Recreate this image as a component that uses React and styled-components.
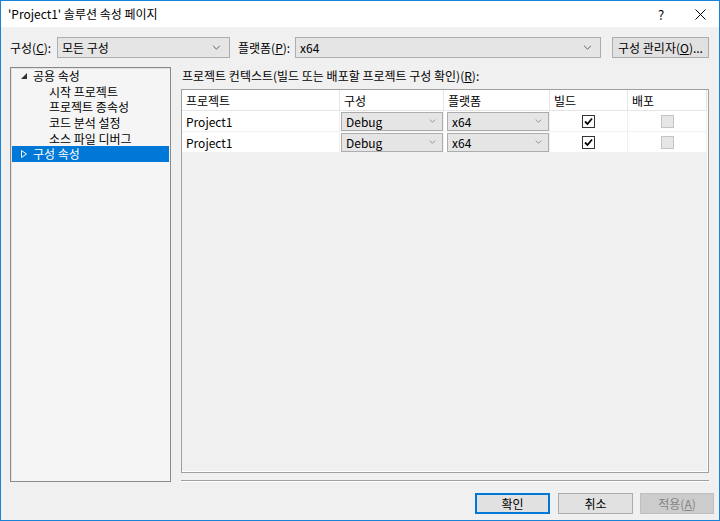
import React from 'react';
import styled, { createGlobalStyle } from 'styled-components';

const GlobalStyle = createGlobalStyle`
	* { box-sizing: border-box; }
	body {
		margin: 0;
		font-family: 'Noto Sans CJK KR', 'Noto Sans', sans-serif;
		font-size: 12px;
		color: #000;
	}
`;

const Window = styled.div`
	width: 720px;
	height: 521px;
	display: flex;
	flex-direction: column;
	border: 1px solid #1883d7;
	background-color: #f0f0f0;
	overflow: hidden;
`;

const TitleBar = styled.div`
	height: 26px;
	display: flex;
	align-items: center;
	background-color: #fff;
	padding-left: 7px;
`;

const Title = styled.div`
	flex: 1;
	font-size: 12px;
	padding-bottom: 1px;
`;

const TitleButton = styled.div`
	width: ${props => props.w || 40}px;
	display: flex;
	justify-content: center;
	align-items: center;
	font-size: 13px;
`;

const Body = styled.div`
	flex: 1;
	display: flex;
	flex-direction: column;
	padding: 10px 10px 0 9px;
`;

const TopRow = styled.div`
	display: flex;
	align-items: center;
	height: 21px;
`;

const Label = styled.div`
	width: ${props => props.w}px;
	margin-left: ${props => props.ml || 0}px;
	white-space: nowrap;
`;

const Combo = styled.div`
	width: ${props => (props.w ? props.w + 'px' : 'auto')};
	flex: ${props => (props.w ? 'none' : 1)};
	height: ${props => props.h || 21}px;
	display: flex;
	align-items: center;
	justify-content: space-between;
	padding: 0 ${props => props.pr || 8}px 0 ${props => props.pl || 4}px;
	background-color: #e5e5e5;
	border: 1px solid #adadad;
	margin: ${props => props.m || 0};
`;

const Button = styled.div`
	width: ${props => props.w}px;
	height: 21px;
	display: flex;
	align-items: center;
	justify-content: center;
	background-color: ${props => (props.disabled ? '#cccccc' : '#e1e1e1')};
	border: 1px solid
		${props => (props.primary ? '#0078d7' : props.disabled ? '#bfbfbf' : '#adadad')};
	box-shadow: ${props => (props.primary ? 'inset 0 0 0 1px #0078d7' : 'none')};
	color: ${props => (props.disabled ? '#838383' : '#000')};
	margin-left: ${props => props.ml || 0}px;
`;

const Main = styled.div`
	display: flex;
	margin-top: 9px;
	height: 415px;
`;

const TreePanel = styled.div`
	width: 161px;
	background-color: #f5f5f5;
	border: 1px solid #8a8a8a;
	box-shadow: inset 1px 1px 0 #e3e3e3;
	padding: 0 1px;
`;

const TreeItem = styled.div`
	height: 15.6px;
	display: flex;
	align-items: center;
	padding-left: ${props => props.indent}px;
	background-color: ${props => (props.selected ? '#0078d7' : 'transparent')};
	color: ${props => (props.selected ? '#fff' : '#000')};
	white-space: nowrap;
	line-height: 15px;
`;

const Arrow = styled.span`
	width: 12px;
	display: inline-flex;
	align-items: center;
`;

const RightColumn = styled.div`
	flex: 1;
	display: flex;
	flex-direction: column;
	margin-left: 10px;
`;

const SectionLabel = styled.div`
	height: 22px;
	display: flex;
	align-items: center;
	padding-left: 1px;
	padding-bottom: 5px;
`;

const GridBox = styled.div`
	flex: 1;
	border: 1px solid #a0a0a0;
	box-shadow: inset -1px -1px 0 #fff;
	background-color: #f0f0f0;
	padding-right: 1px;
`;

const GridRow = styled.div`
	display: grid;
	grid-template-columns: 158px 104px 106px 78px 79px;
	height: ${props => props.h || 21}px;
	background-color: #fff;
	border-bottom: 1px solid ${props => (props.header ? '#e5e5e5' : '#f0f0f0')};
`;

const Cell = styled.div`
	display: flex;
	align-items: center;
	justify-content: ${props => (props.center ? 'center' : 'flex-start')};
	padding-left: ${props => (props.center ? 0 : 4)}px;
	border-right: 1px solid ${props => (props.header ? '#e5e5e5' : '#f0f0f0')};
	white-space: nowrap;
`;

const ComboCell = styled(Cell)`
	padding: 0 1px;
`;

const CheckBox = styled.div`
	width: 13px;
	height: 13px;
	border: 1px solid ${props => (props.disabled ? '#c4c4c4' : '#333')};
	background-color: ${props => (props.disabled ? '#e6e6e6' : '#fff')};
	display: flex;
	align-items: center;
	justify-content: center;
`;

const Separator = styled.div`
	margin-top: 7px;
	height: 2px;
	border-top: 1px solid #a0a0a0;
	border-bottom: 1px solid #fff;
`;

const Footer = styled.div`
	display: flex;
	justify-content: flex-end;
	margin-top: 11px;
	margin-right: -5px;
`;

const Chevron = ({ size = 9, color = '#555' }) => (
	<svg width={size} height={Math.round(size * 0.6)} viewBox="0 0 10 6">
		<path d="M1 1 L5 5 L9 1" fill="none" stroke={color} strokeWidth="1.1" />
	</svg>
);

const Check = () => (
	<svg width="9" height="9" viewBox="0 0 9 9">
		<path d="M1 4.5 L3.5 7 L8 1.5" fill="none" stroke="#000" strokeWidth="1.8" />
	</svg>
);

const projects = [
	{ name: 'Project1', config: 'Debug', platform: 'x64', build: true },
	{ name: 'Project1', config: 'Debug', platform: 'x64', build: true },
];

const treeChildren = ['시작 프로젝트', '프로젝트 종속성', '코드 분석 설정', '소스 파일 디버그'];

const App = () => {
	return (
		<>
			<GlobalStyle />
			<Window>
				<TitleBar>
					<Title>'Project1' 솔루션 속성 페이지</Title>
					<TitleButton w={40}>?</TitleButton>
					<TitleButton w={38}>
						<svg width="11" height="11" viewBox="0 0 11 11">
							<path d="M0.5 0.5 L10.5 10.5 M10.5 0.5 L0.5 10.5" stroke="#000" strokeWidth="1" />
						</svg>
					</TitleButton>
				</TitleBar>
				<Body>
					<TopRow>
						<Label w={47}>
							구성(<u>C</u>):
						</Label>
						<Combo w={173}>
							모든 구성
							<Chevron />
						</Combo>
						<Label w={57} ml={8}>
							플랫폼(<u>P</u>):
						</Label>
						<Combo>
							x64
							<Chevron />
						</Combo>
						<Button w={97} ml={11}>
							구성 관리자(<u>O</u>)...
						</Button>
					</TopRow>
					<Main>
						<TreePanel>
							<TreeItem indent={9}>
								<Arrow>
									<svg width="6" height="6" viewBox="0 0 6 6">
										<polygon points="6,0 6,6 0,6" fill="#333" />
									</svg>
								</Arrow>
								공용 속성
							</TreeItem>
							{treeChildren.map(item => (
								<TreeItem key={item} indent={37}>
									{item}
								</TreeItem>
							))}
							<TreeItem indent={9} selected>
								<Arrow>
									<svg width="6" height="8" viewBox="0 0 6 8">
										<polygon points="0.5,0.5 5.5,4 0.5,7.5" fill="none" stroke="#fff" strokeWidth="1" />
									</svg>
								</Arrow>
								구성 속성
							</TreeItem>
						</TreePanel>
						<RightColumn>
							<SectionLabel>
								프로젝트 컨텍스트(빌드 또는 배포할 프로젝트 구성 확인)(<u>R</u>):
							</SectionLabel>
							<GridBox>
								<GridRow header>
									<Cell header>프로젝트</Cell>
									<Cell header>구성</Cell>
									<Cell header>플랫폼</Cell>
									<Cell header>빌드</Cell>
									<Cell header>배포</Cell>
								</GridRow>
								{projects.map((p, i) => (
									<GridRow key={i}>
										<Cell>{p.name}</Cell>
										<ComboCell>
											<Combo w={102} h={19} pl={4} pr={6} m="0">
												{p.config}
												<Chevron size={7} color="#777" />
											</Combo>
										</ComboCell>
										<ComboCell>
											<Combo w={102} h={19} pl={4} pr={6} m="0 0 0 2px">
												{p.platform}
												<Chevron size={7} color="#777" />
											</Combo>
										</ComboCell>
										<Cell center>
											<CheckBox>{p.build && <Check />}</CheckBox>
										</Cell>
										<Cell center>
											<CheckBox disabled />
										</Cell>
									</GridRow>
								))}
							</GridBox>
							<Separator />
						</RightColumn>
					</Main>
					<Footer>
						<Button w={75} primary>
							확인
						</Button>
						<Button w={75} ml={8}>
							취소
						</Button>
						<Button w={74} ml={7} disabled>
							적용(<u>A</u>)
						</Button>
					</Footer>
				</Body>
			</Window>
		</>
	);
};

export default App;
